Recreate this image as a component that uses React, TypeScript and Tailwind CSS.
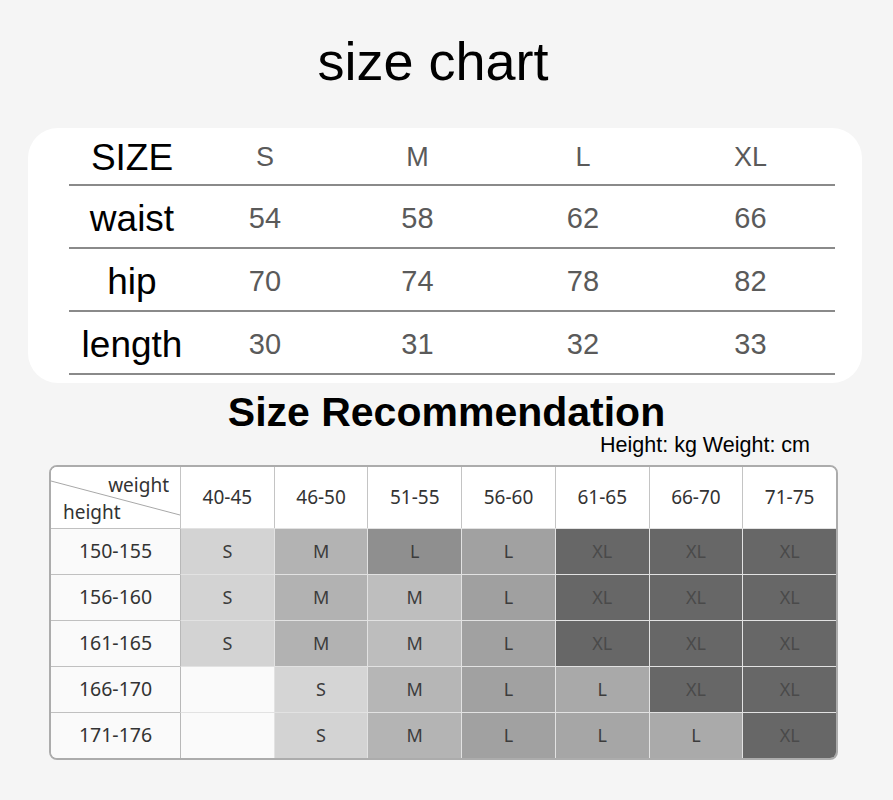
const sizeRows = [
  { label: "waist", values: ["54", "58", "62", "66"] },
  { label: "hip", values: ["70", "74", "78", "82"] },
  { label: "length", values: ["30", "31", "32", "33"] },
];

const weights = ["40-45", "46-50", "51-55", "56-60", "61-65", "66-70", "71-75"];

// each cell: [letter, bg class]
const recRows: { height: string; cells: [string, string][] }[] = [
  {
    height: "150-155",
    cells: [
      ["S", "bg-[#d3d3d3]"],
      ["M", "bg-[#b3b3b3]"],
      ["L", "bg-[#8f8f8f]"],
      ["L", "bg-[#a1a1a1]"],
      ["XL", "bg-[#676767]"],
      ["XL", "bg-[#676767]"],
      ["XL", "bg-[#676767]"],
    ],
  },
  {
    height: "156-160",
    cells: [
      ["S", "bg-[#d3d3d3]"],
      ["M", "bg-[#b2b2b2]"],
      ["M", "bg-[#bebebe]"],
      ["L", "bg-[#a0a0a0]"],
      ["XL", "bg-[#676767]"],
      ["XL", "bg-[#676767]"],
      ["XL", "bg-[#676767]"],
    ],
  },
  {
    height: "161-165",
    cells: [
      ["S", "bg-[#d3d3d3]"],
      ["M", "bg-[#b2b2b2]"],
      ["M", "bg-[#bdbdbd]"],
      ["L", "bg-[#a1a1a1]"],
      ["XL", "bg-[#676767]"],
      ["XL", "bg-[#676767]"],
      ["XL", "bg-[#676767]"],
    ],
  },
  {
    height: "166-170",
    cells: [
      ["", "bg-[#fafafa]"],
      ["S", "bg-[#d5d5d5]"],
      ["M", "bg-[#b6b6b6]"],
      ["L", "bg-[#a1a1a1]"],
      ["L", "bg-[#a9a9a9]"],
      ["XL", "bg-[#676767]"],
      ["XL", "bg-[#676767]"],
    ],
  },
  {
    height: "171-176",
    cells: [
      ["", "bg-[#fafafa]"],
      ["S", "bg-[#d3d3d3]"],
      ["M", "bg-[#b4b4b4]"],
      ["L", "bg-[#a1a1a1]"],
      ["L", "bg-[#a6a6a6]"],
      ["L", "bg-[#aaaaaa]"],
      ["XL", "bg-[#676767]"],
    ],
  },
];

const topCols = "grid grid-cols-[126px_140px_165px_166px_169px]";

export default function App() {
  return (
    <div className="min-h-screen w-[893px] bg-[#f5f5f5] font-['Liberation_Sans',Arial,sans-serif] overflow-hidden">
      {/* Title */}
      <h1 className="pt-[34px] pb-[2px] text-center text-[54px] leading-none text-black pr-[27px]">size chart</h1>

      {/* Size chart card */}
      <div className="mt-[38px] ml-[28px] w-[834px] h-[255px] rounded-[30px] bg-white pl-[41px]">
        <div className={`${topCols} h-[58px] items-center border-b-2 border-[#8a8a8a] w-[766px]`}>
          <span className="text-center text-[37px] leading-none text-black pt-[2px]">SIZE</span>
          {["S", "M", "L", "XL"].map((s) => (
            <span key={s} className="text-center text-[27px] leading-none text-[#5a5a5a] pt-[2px]">
              {s}
            </span>
          ))}
        </div>
        {sizeRows.map((r) => (
          <div key={r.label} className={`${topCols} h-[63px] items-center border-b-2 border-[#8a8a8a] w-[766px]`}>
            <span className="text-center text-[37px] leading-none text-black pt-[3px]">{r.label}</span>
            {r.values.map((v, i) => (
              <span key={i} className="text-center text-[29px] leading-none text-[#5a5a5a] pt-[3px]">
                {v}
              </span>
            ))}
          </div>
        ))}
      </div>

      {/* Recommendation */}
      <h2 className="mt-[9px] text-center text-[41px] leading-none font-bold text-black">Size Recommendation</h2>
      <p className="mt-[2px] text-right pr-[83px] text-[21.5px] leading-none text-black">Height: kg Weight: cm</p>

      <div className="mt-[8px] ml-[49px] w-[789px] rounded-lg border-2 border-[#acacac] overflow-hidden font-['Noto_Sans','Open_Sans',sans-serif] text-[#333]">
        <div className="grid grid-cols-[129px_repeat(7,1fr)] bg-white">
          <div className="relative h-[61px] bg-white">
            <svg className="absolute inset-0" width="129" height="61">
              <line x1="0" y1="14" x2="129" y2="48" stroke="#a8a8a8" strokeWidth="1" />
            </svg>
            <span className="absolute right-[11px] top-[9px] text-[19px] leading-none">weight</span>
            <span className="absolute left-[12px] top-[36px] text-[19px] leading-none">height</span>
          </div>
          {weights.map((w) => (
            <div key={w} className="h-[61px] flex items-center justify-center border-l border-[#c4c4c4] text-[19px]">
              {w}
            </div>
          ))}
        </div>
        {recRows.map((row) => (
          <div key={row.height} className="grid grid-cols-[129px_repeat(7,1fr)]">
            <div className="h-[46px] flex items-center justify-center bg-[#fafafa] border-t border-[#c0c0c0] text-[19.5px]">
              {row.height}
            </div>
            {row.cells.map(([s, bg], i) => (
              <div
                key={i}
                className={`h-[46px] flex items-center justify-center border-t ${
                  i === 0 ? "border-l border-l-[#b8b8b8]" : "border-l border-l-[#e2e2e2]"
                } border-t-[#e2e2e2] ${bg} text-[18px] ${s === "XL" ? "text-[#4a4a4a]" : "text-[#3c3c3c]"}`}
              >
                {s}
              </div>
            ))}
          </div>
        ))}
      </div>
    </div>
  );
}
